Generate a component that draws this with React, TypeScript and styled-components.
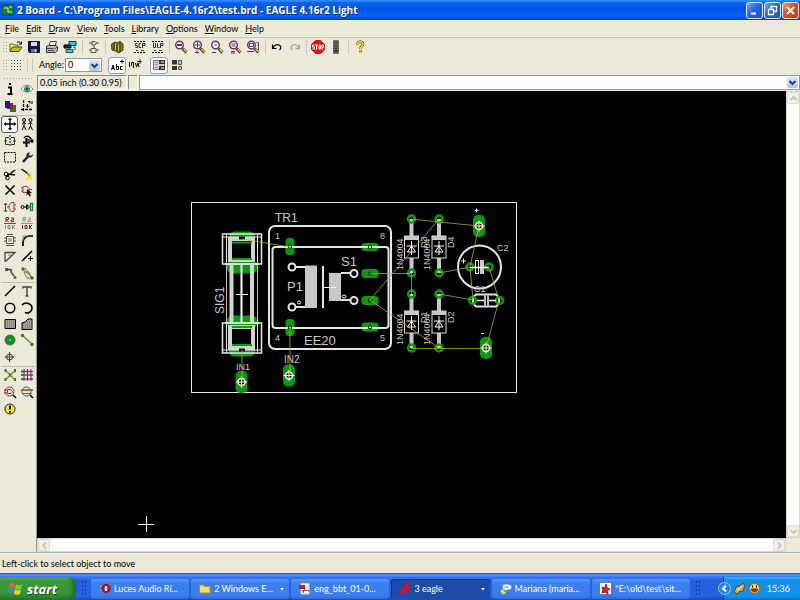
import React from "react";
import styled, { createGlobalStyle } from "styled-components";

const Global = createGlobalStyle`
  * { box-sizing: border-box; }
  body { margin: 0; background: #ece9d8; }
  button, input, select { font: inherit; margin: 0; padding: 0; color: inherit; }
`;

const Window = styled.div`
  display: flex;
  flex-direction: column;
  min-height: 100vh;
  background: #ece9d8;
  color: #000;
  font: 9px/12px Lato, "Liberation Sans", sans-serif;
  overflow: hidden;
  svg { display: block; flex-shrink: 0; }
`;

const TitleBar = styled.header`
  display: flex;
  align-items: center;
  height: 20px;
  padding: 0 1px 0 2px;
  gap: 3px;
  background: linear-gradient(#3a94ff 0, #0a5ff0 15%, #0054e3 45%, #0262fb 80%, #0040c8 100%);
  color: #fff;
`;
const Title = styled.h1`
  flex: 1;
  margin: 0;
  font: bold 10px/14px "Open Sans", "Noto Sans", sans-serif;
  white-space: nowrap;
  text-shadow: 1px 1px #0a2f8c;
`;
const WindowButton = styled.button<{ $close?: boolean }>`
  display: grid;
  place-items: center;
  width: 17px;
  height: 17px;
  border: 1px solid #dbe6fb;
  border-radius: 3px;
  background: ${(p) => (p.$close ? "linear-gradient(135deg,#f0a088,#e0532c 40%,#c63a12)" : "linear-gradient(135deg,#7fa6f5,#2a62e0 45%,#2050c8)")};
`;
const WindowButtons = styled.div`
  display: flex;
  gap: 1px;
`;

const MenuBar = styled.nav`
  display: flex;
  align-items: center;
  height: 18px;
  padding-left: 5px;
  gap: 7px;
  border-bottom: 1px solid #c5c2b2;
`;
const MenuItem = styled.button`
  border: 0;
  background: none;
  white-space: nowrap;
  &::first-letter { text-decoration: underline; }
`;

const Toolbar = styled.div`
  display: flex;
  align-items: center;
  height: 18px;
`;
const Grip = styled.span`
  width: 5px;
  height: 12px;
  margin-left: 2px;
  background: radial-gradient(circle, #a9a693 1px, transparent 1px) 0 0 / 3px 3px;
`;
const Tool = styled.button<{ $on?: boolean }>`
  display: grid;
  place-items: center;
  width: 18px;
  height: 17px;
  border: 1px solid ${(p) => (p.$on ? "#8aa0bd" : "transparent")};
  border-radius: 3px;
  background: ${(p) => (p.$on ? "#fbfbf8" : "none")};
`;
const Divider = styled.span<{ $w: number; $hidden?: boolean }>`
  width: ${(p) => p.$w}px;
  height: 14px;
  background: linear-gradient(${(p) => (p.$hidden ? "transparent, transparent" : "#cbc8b8, #cbc8b8")}) center / 1px 100% no-repeat;
`;
const AngleLabel = styled.label`
  display: flex;
  align-items: center;
  gap: 1px;
  margin: 0 6px 0 4px;
`;
const ComboFrame = styled.span`
  display: flex;
  align-items: center;
  width: 37px;
  height: 14px;
  border: 1px solid #7f9db9;
  background: #fff;
  padding-right: 1px;
  select {
    appearance: none;
    flex: 1;
    min-width: 0;
    border: 0;
    padding-left: 2px;
    background: none;
  }
`;

const Main = styled.main`
  display: flex;
  flex: 1;
`;
const Palette = styled.aside`
  display: flex;
  flex-direction: column;
  width: 36px;
  padding: 3px 1px 0;
`;
const PaletteGrip = styled.span`
  height: 4px;
  margin: 0 2px;
  background: radial-gradient(circle, #a9a693 1px, transparent 1px) 0 0 / 3px 3px;
`;
const PaletteGroup = styled.div<{ $h: number }>`
  display: grid;
  grid-template-columns: 17px 17px;
  grid-auto-rows: 1fr;
  height: ${(p) => p.$h}px;
  & + & { border-top: 1px solid #bfbcab; margin-top: 1px; }
`;
const PaletteTool = styled(Tool)`
  width: 17px;
  height: 100%;
  border-width: ${(p) => (p.$on ? "1px" : "0")};
  border-color: ${(p) => (p.$on ? "#3f5a86" : "transparent")};
`;

const Work = styled.section`
  display: flex;
  flex: 1;
  min-width: 0;
  flex-direction: column;
  padding-top: 1px;
`;
const CommandRow = styled.div`
  display: flex;
  height: 16px;
  gap: 1px;
  padding: 0 0 1px 1px;
`;
const Coordinates = styled.output`
  width: 90px;
  padding: 0 0 0 2px;
  line-height: 14px;
  white-space: nowrap;
  border: 1px solid #fff;
  border-top-color: #8f8c7c;
  border-left-color: #8f8c7c;
`;
const CommandSpacer = styled.span`
  width: 10px;
  border: 1px solid #fff;
  border-top-color: #8f8c7c;
  border-left-color: #8f8c7c;
`;
const CommandBox = styled.div`
  display: flex;
  flex: 1;
  align-items: center;
  padding: 0 1px;
  border: 1px solid #7f9db9;
  background: #fff;
  input { flex: 1; min-width: 0; border: 0; outline: 0; background: none; }
`;
const DropButton = styled.button`
  display: grid;
  place-items: center;
  width: 11px;
  height: 11px;
  border: 0;
  border-radius: 2px;
  background: linear-gradient(#dbe6fd, #b0c5f3);
`;
const BoardArea = styled.div`
  display: grid;
  flex: 1;
  grid-template-columns: 1fr 14px;
  grid-template-rows: 1fr 14px;
  border-left: 1px solid #9a9a90;
`;
const Canvas = styled.div`
  display: flex;
  background: #000;
  overflow: hidden;
  svg { flex: 1; min-width: 0; }
`;
const Scroll = styled.div<{ $vertical?: boolean }>`
  display: flex;
  flex-direction: ${(p) => (p.$vertical ? "column" : "row")};
  justify-content: space-between;
  border: 1px solid #d5d6d0;
  background: #fbfbf8;
`;
const ScrollButton = styled.button`
  display: grid;
  place-items: center;
  width: 12px;
  height: 12px;
  border: 1px solid #dedbcb;
  border-radius: 2px;
  background: #f2f0e6;
`;
const Status = styled.footer`
  height: 21px;
  padding: 5px 2px 0;
  border-top: 1px solid #a7b6c4;
  white-space: nowrap;
`;

const Taskbar = styled.footer`
  display: flex;
  height: 27px;
  padding-top: 4px;
  background: linear-gradient(#1f50b8 0, #5b97f5 8%, #3a78ea 14%, #245edb 30%, #2663e0 85%, #1d4cb8 100%);
  color: #fff;
`;
const Start = styled.button`
  display: flex;
  align-items: center;
  gap: 4px;
  width: 76px;
  padding-left: 8px;
  border: 0;
  border-radius: 0 8px 8px 0;
  background: linear-gradient(#7cc077 0, #3c9a3c 18%, #379637 70%, #2b7a2b 100%);
  box-shadow: inset -3px 0 4px #23692a;
  font: italic bold 13px/18px "Open Sans", sans-serif;
  text-shadow: 1px 1px 1px #1d4d1d;
`;
const TaskGrip = styled.span`
  width: 6px;
  height: 16px;
  margin: 3px 4px 0 5px;
  background: radial-gradient(circle, #153f9e 1px, transparent 1px) 0 0 / 3px 4px;
`;
const Tasks = styled.div`
  display: grid;
  grid-template-columns: repeat(6, minmax(0, 1fr));
  flex: 1;
  gap: 2px;
  padding: 2px 0 1px;
`;
const Task = styled.button<{ $on?: boolean }>`
  display: flex;
  align-items: center;
  gap: 3px;
  padding: 0 4px 0 8px;
  border: 0;
  border-radius: 2px;
  background: ${(p) => (p.$on ? "#1c4ba8" : "linear-gradient(#5a96fa, #3c81f0 20%, #3a7cee 85%, #3069d8)")};
  box-shadow: ${(p) => (p.$on ? "inset 1px 1px 1px #123680" : "none")};
  text-align: left;
  white-space: nowrap;
`;
const TaskName = styled.span`
  flex: 1;
  overflow: hidden;
`;
const Tray = styled.div`
  display: flex;
  align-items: center;
  gap: 2px;
  margin-left: 18px;
  padding-right: 10px;
  background: linear-gradient(#3bb0f8 0, #1290e8 15%, #1190ea 85%, #0d6fc4 100%);
  border-left: 1px solid #0a4aa8;
`;
const TrayToggle = styled.button`
  display: grid;
  place-items: center;
  width: 13px;
  height: 13px;
  margin-left: -6px;
  border: 1px solid #8cc8ff;
  border-radius: 50%;
  background: #2b7fe8;
`;
const Clock = styled.time`
  margin-left: 4px;
`;

type IconProps = { children: React.ReactNode; w?: number; h?: number };
const Icon = ({ children, w = 14, h = 14 }: IconProps) => (
  <svg width={w} height={h} viewBox={`0 0 ${w} ${h}`} fill="none" stroke="#000" strokeWidth="1" aria-hidden="true">
    {children}
  </svg>
);
const Chevron = ({ d, color = "#26406f" }: { d: string; color?: string }) => (
  <Icon w={9} h={9}><path d={d} stroke={color} strokeWidth="2" /></Icon>
);
const down = "M1.5 3l3 3 3-3";
const up = "M1.5 6l3-3 3 3";
const left = "M6 1.5l-3 3 3 3";
const right = "M3 1.5l3 3-3 3";

const Lens = ({ children }: { children?: React.ReactNode }) => (
  <Icon>
    <path d="M8.5 8.5l4 4" stroke="#333" strokeWidth="3" />
    <path d="M9.5 9l3 3" stroke="#e8e040" strokeWidth="1.3" />
    <circle cx="5.5" cy="5" r="3.8" fill="#fbf4fb" stroke="#63385f" strokeWidth="1.4" />
    {children}
  </Icon>
);
const maroon = "#7a1f6a";

const menus = ["File", "Edit", "Draw", "View", "Tools", "Library", "Options", "Window", "Help"];

type Entry = { label: string; icon: React.ReactNode; on?: boolean } | { gap: number; hidden?: boolean };
const actions: Entry[] = [
  { label: "Open", icon: <Icon><path d="M1 11V4h3l1 1h4v2" fill="#f5ee8c" stroke="#6b6418" /><path d="M1 11.5L3.500 7H13l-3 4.500z" fill="#c9bd20" stroke="#4d4810" /><path d="M8 2.500c2-1.500 3-.5 4 1M12.500 1.500v2.500H10" /></Icon> },
  { label: "Save", icon: <Icon><path d="M1.500 1.500h11v11h-10l-1-1z" fill="#14145e" stroke="#0b0b35" /><path d="M4 2h6v4H4z" fill="#d8dcf0" stroke="none" /><path d="M4 9h6v3.500H4z" fill="#777" stroke="none" /><path d="M8 9.500h1v2H8z" fill="#fff" stroke="none" /></Icon> },
  { label: "Print", icon: <Icon><path d="M4 6l1.500-4.500h6L10 6" fill="#fff" stroke="#444" /><path d="M1.500 6.500l2-1h8l1 1v4l-2 2h-9z" fill="#b9b9b0" stroke="#333" /><path d="M1.500 8.500h9l2-2M3 10.500h6" stroke="#444" /><path d="M8 9h2" stroke="#dfd020" /></Icon> },
  { label: "CAM Processor", icon: <Icon><path d="M6 1.500h7v4H6z" fill="#18d6e0" stroke="#14313a" /><path d="M1 5h7v3H1z" fill="#0c2d4e" /><path d="M3 9.500h7v3H3z" fill="#20dce8" stroke="#19505a" /><path d="M10 7h2v3" stroke="#1b6670" /></Icon> },
  { gap: 6 },
  { label: "Schematic", icon: <Icon><path d="M5 1.500h3l1.500 1.500L8 5H5zM4 8.500h5v4H4zM2 3h3M2 10h2M9 3h3M9 10h3M7 5v3" stroke="#55534a" /></Icon> },
  { gap: 5 },
  { label: "Use library", icon: <Icon><path d="M1.500 4L5 2l2 1 3-1.500L13 4v6l-4 3-3-2-4-1z" fill="#86801e" stroke="#3f3c08" /><path d="M4 3.500v7M7 4v8M10 3v9" stroke="#24220a" /><path d="M5.500 4v6M8.500 5v6" stroke="#d9cf36" /></Icon> },
  { gap: 5, hidden: true },
  { label: "Script", icon: <Icon><path d="M1 1.500h12M1 12.500h12" strokeDasharray="2 1" /><path d="M4.500 3.500h-2v2h2v2h-2M8 3.500H6v4h2M9.500 8V3.500H12v2H9.500" stroke="#333" /><path d="M3 10.500h2M8 10.500h3" stroke="#444" /></Icon> },
  { label: "Run ULP", icon: <Icon><path d="M1 1.500h12M1 12.500h12" strokeDasharray="2 1" /><path d="M2.500 3v4.500h2V3M6.500 3v4.500h2M9.500 8V3.500H12v2H9.500" stroke="#333" /><path d="M3 10.500h2M8 10.500h3" stroke="#444" /></Icon> },
  { gap: 5 },
  { label: "Zoom to fit", icon: <Lens><path d="M3 5h5" stroke={maroon} strokeWidth="2" /></Lens> },
  { label: "Zoom in", icon: <Lens><path d="M3 5h5M5.500 2.500v5M3 12.500h4M5 10.500v3" stroke={maroon} /></Lens> },
  { label: "Zoom out", icon: <Lens><path d="M4.500 5h2M2 12.500h4" stroke={maroon} /></Lens> },
  { label: "Zoom redraw", icon: <Lens><path d="M3.500 4h4M3.500 6h4M3 11.500h4M3 13h4" stroke={maroon} /></Lens> },
  { label: "Zoom select", icon: <Lens><path d="M3.500 3.500h4v3h-4zM10.500 2.500h2v8M1 11.500h7" stroke="#63385f" /></Lens> },
  { gap: 6 },
  { label: "Undo", icon: <Icon><path d="M2.500 4.500v4h4M3 8c1-3 4-4 6-3s2.500 3 .5 5" strokeWidth="1.2" /></Icon> },
  { label: "Redo", icon: <Icon><path d="M11.500 4.500v4h-4M11 8c-1-3-4-4-6-3s-2.500 3-.5 5" stroke="#aaa797" strokeWidth="1.3" /></Icon> },
  { gap: 5 },
  { label: "Stop", icon: <Icon><path d="M4.500.500h5l4 4v5l-4 4h-5l-4-4v-5z" fill="#ee1111" stroke="#d01010" /><path d="M3.500 5H1.500v2h2v2h-2M4 5h3M5.500 5v4.500M8 5h1.500v4H8zM11 9.500V5h1.500v2.500H11" stroke="#fff" /></Icon> },
  { label: "Go", icon: <Icon><path d="M4.500.500h5v13h-5z" fill="#6e716b" stroke="#4c4f4a" strokeDasharray="2 1" /><circle cx="7" cy="3" r="1.300" fill="#c9c9bd" stroke="#222" /><circle cx="7" cy="7" r="1.300" fill="#b4b7ab" stroke="#222" /><circle cx="7" cy="11" r="1.300" fill="#2d8047" stroke="#222" /></Icon> },
  { gap: 6 },
  { label: "Help", icon: <Icon><path d="M4.500 4.500C4.500 1 10 1 10 4c0 2-2.500 2.500-2.500 5M7.500 10.500v2" stroke="#3d3a05" strokeWidth="2.600" /><path d="M4.500 4.500C4.500 1 10 1 10 4c0 2-2.500 2.500-2.500 5M7.500 11v1.500" stroke="#f4ec10" strokeWidth="1.600" /></Icon> },
];

const G = "#188a2c";
const R = "#b03030";
type PaletteEntry = [string, React.ReactNode, boolean?] | null;
const groups: { h: number; tools: PaletteEntry[] }[] = [
  {
    h: 33,
    tools: [
      ["Info", <path d="M5 5.500h3V12M4.500 12h5M6 2h2" strokeWidth="2" />],
      ["Show", <><path d="M1 7c3-5 9-5 12 0-3 4-9 4-12 0z" fill="#fff" stroke="#8c7e30" /><circle cx="7" cy="7" r="2.500" fill="#20b8c0" stroke="#107880" /><circle cx="7" cy="7" r="1" fill="#000" stroke="none" /></>],
      ["Display", <><path d="M7 6h6v7H7z" fill="#1d7d33" stroke="none" /><path d="M4 4h6v6H4z" fill="#a01c38" stroke="none" /><path d="M2 2h5v7H2z" fill="#161c88" stroke="none" /></>],
      ["Mark", <><path d="M3.500 1v12M1 10.500h12" strokeDasharray="3 1" strokeWidth="1.300" /><path d="M5.500 7h4M7.500 5v4M8 2.500h2v2M12 2v3" /></>],
    ],
  },
  {
    h: 166,
    tools: [
      ["Move", <><path d="M7 2v10M2 7h10" strokeWidth="1.300" /><path d="M7 .500L5 3h4zM7 13.500L5 11h4zM.500 7L3 5v4zM13.500 7L11 5v4z" fill="#000" stroke="none" /></>, true],
      ["Copy", <><circle cx="4" cy="3" r="1.500" /><circle cx="10.500" cy="3" r="1.500" /><path d="M4 4.500V9l-2 4M4 9l2 4M2 7l2-1.500L6 7M10.500 4.500V9l-2 4M10.500 9l2 4M8.500 7l2-1.500 2 1.500" /></>],
      ["Mirror", <><path d="M7 1v12" strokeDasharray="2 1" /><path d="M6 3.500H2.500v7H6M8 3.500h3.500v7H8M1 7h3M10 7h3" stroke="#333" /></>],
      ["Rotate", <><path d="M6.500 4v9M3 8.500h7" strokeWidth="2" /><path d="M4 4c3-4 7-1 8.500 4M12.500 8.500l-3-2M12.500 8.500l.5-3" strokeWidth="1.300" /><path d="M7 5h3v3H7z" fill="#555" stroke="none" /></>],
      ["Group", <path d="M1.500 2.500h11v9.500h-11z" strokeDasharray="2 1" />],
      ["Change", <><path d="M3 12L8 6.500" strokeWidth="2.500" stroke="#222" /><path d="M7 7c-2-3 1-5 3-4.500L9 4.500l1.500 1.500L13 4c0 3-2 4-4.500 3.500z" fill="#333" stroke="none" /></>],
      ["Cut", <><path d="M3 10L12 3M5 7L12 8" strokeWidth="1.400" /><circle cx="3" cy="7" r="1.800" /><circle cx="4.500" cy="11" r="1.800" /></>],
      ["Paste", <><path d="M1.500 2l7 5" strokeWidth="1.500" /><path d="M7 6l4 4" stroke="#b9a016" strokeWidth="2" /><path d="M6 11.500h6M10 9h2" stroke="#f7ec20" strokeWidth="3" /></>],
      ["Delete", <path d="M2.500 2.500l9 9M11.500 2.500l-9 9" strokeWidth="1.500" />],
      ["Add", <><path d="M3 3.500h3c4 0 4 6 0 6H3zM1 5h2M1 8h2M9 6.500h3" stroke={R} /><path d="M7 6l5 4-2.500.500L11 13l-1.500.500L8 11l-1.500 1.500z" fill="#111" stroke="none" /></>],
      ["Pinswap", <><path d="M11 2.500H9c-4 1-4 8 0 9h2zM11 5h2M11 9h2M4 7h2" stroke={R} /><path d="M2.500 4v7M1 5l1.500-2L4 5M1 10l1.500 2L4 10" stroke="#33573d" /></>],
      ["Gateswap", <><circle cx="2.500" cy="7" r="1.500" /><path d="M4 7h2" /><path d="M6.500 5h1.500v4H6.500z" /><path d="M10.500 3.500h2v7h-2zM8 7h2" stroke={G} strokeWidth="1.300" /></>],
      ["Name", <><path d="M3 6V1.500h2.500v2H3.500l2 2.500M8 2h2.500v2H8v1.500h3" stroke="#7a2220" /><path d="M1 7.500h12" stroke={R} /><path d="M2.500 9v4M5 9.500h2v3H5zM9.500 9v4M12 9l-2 2 2 2" stroke="#888476" /></>],
      ["Value", <><path d="M3 6V1.500h2.500v2H3.500l2 2.500M8 2h2.500v2H8v1.500h3" stroke="#98958a" /><path d="M1 7.500h12" stroke="#c38378" /><path d="M2.500 9v4M5 9.500h2v3H5zM9.500 9v4M12 9l-2 2 2 2" stroke="#7a2220" /></>],
      ["Smash", <><path d="M3.500 3.500h7v7h-7zM1 5h2M1 8h2M11 5h2M11 8h2M3 12.500h8M4 1.500h6" stroke="#55534b" /><path d="M5 6h4M5 8h4" stroke="#777" /></>],
      ["Miter", <><path d="M3 13V9c0-3 3-6 6-6h4" strokeWidth="1.700" /><path d="M3 8V3h5" stroke="#888" /></>],
      ["Split", <><path d="M2 12V3.500h10L3 12z" strokeWidth="1.300" stroke="#444" /><path d="M5 6h3" stroke="#888" /></>],
      ["Optimize", <><path d="M2 12L12 2" strokeWidth="1.600" /><path d="M8 9.500h5M10.500 7v5" /></>],
      ["Route", <><path d="M2 3.500h3" stroke={G} strokeWidth="3" /><path d="M4 3.500h4v3" stroke="#26369a" strokeWidth="1.500" /><path d="M8 6l3 4" stroke="#d02020" strokeWidth="1.500" /><circle cx="12" cy="11.500" r="1.500" fill={G} stroke="none" /></>],
      ["Ripup", <><path d="M2 3l10 8" stroke="#887d20" /><path d="M5 2l6 8M4 6h5l2 6H7z" stroke="#80764a" /><circle cx="3" cy="3" r="1.700" fill={G} stroke="none" /><circle cx="12" cy="12" r="1.700" fill={G} stroke="none" /></>],
    ],
  },
  {
    h: 83,
    tools: [
      ["Wire", <path d="M2 12L12 2" strokeWidth="1.500" />],
      ["Text", <path d="M3 4.500V3h8v1.500M7 3v9M5.500 12h3" strokeWidth="1.400" stroke="#444" />],
      ["Circle", <circle cx="7" cy="7" r="4.800" strokeWidth="1.500" />],
      ["Arc", <path d="M2 4c4-4 10-1 10 3s-4 6-7 4.500" strokeWidth="1.600" />],
      ["Rect", <><path d="M2 2.500h10.500v9H2z" fill="#a7a59b" /><path d="M2 4h10M2 6h10M2 8h10M2 10h10" strokeDasharray="1 1" stroke="#666" /></>],
      ["Polygon", <><path d="M2 12.500V6l3-1 3-3h4v10.500z" fill="#a7a59b" /><path d="M3 7h9M3 9h9M3 11h9M7 5h5" strokeDasharray="1 1" stroke="#666" /></>],
      ["Via", <><circle cx="7" cy="7" r="5" fill={G} stroke={G} /><circle cx="7" cy="7" r="1" fill="#9fd8a6" stroke="none" /></>],
      ["Signal", <><path d="M2 2l10 9" stroke="#8e8621" strokeWidth="1.500" /><circle cx="2.500" cy="2.500" r="1.700" fill={G} stroke="none" /><circle cx="12" cy="11.500" r="1.700" fill={G} stroke="none" /></>],
      ["Hole", <><circle cx="6.500" cy="7" r="3" stroke="#333" /><path d="M6.500 2v10M1.500 7h10" stroke="#444" /></>],
      null,
    ],
  },
  {
    h: 51,
    tools: [
      ["Ratsnest", <><path d="M2 2l10 10M12 3L2 12" stroke="#7f8a20" strokeWidth="1.300" /><path d="M1.500 2.500h2M11 2.500h2M1.500 11.500h2M11 11.500h2M6 7h2" stroke={G} strokeWidth="3" /></>],
      ["Autorouter", <><path d="M1 3.500h12M1 7h12M1 11h12" stroke="#c32a4c" strokeWidth="1.400" /><path d="M4 1v12M7.500 1v12M11 1v12" stroke="#303ba8" /><path d="M1 3.500h2M1 7h2M1 11h2" stroke={G} strokeWidth="2" /></>],
      ["ERC", <><circle cx="6.500" cy="6.500" r="4.500" stroke="#55513f" /><path d="M10 10l3 3" strokeWidth="1.600" /><path d="M4.500 4.500h2.500c3 1 3 4 0 4H4.500z" stroke={R} /><path d="M1 5h3M1 8h3" stroke={R} /></>],
      ["DRC", <><circle cx="6.500" cy="6.500" r="4.500" stroke="#55513f" /><path d="M10 10l3 3" strokeWidth="1.600" /><path d="M1 5h12" stroke="#b03030" strokeWidth="1.500" /><path d="M2 8.500h10" stroke={G} /></>],
      ["Errors", <><circle cx="7" cy="7" r="5" fill="#f6ee18" stroke="#222" /><path d="M7 3.500v4M7 9v1.800" strokeWidth="2" /></>],
    ],
  },
];

const wires = [
  "M242 239L290 247", "M242 350V382", "M290 327V375", "M370 273.500H411", "M370 300L439 219",
  "M370 300L439 348", "M411 219L439 222L479 226", "M411.500 273V294", "M439 273L470 267",
  "M439 294L473 300", "M411 348.500H486", "M479 226L470 267L473 300", "M489 267L499 300L486 348",
];
const Pad = ({ x, y, w, h }: { x: number; y: number; w: number; h: number }) => (
  <rect x={x - w / 2} y={y - h / 2} width={w} height={h} rx={Math.min(w, h) / 2.5} fill="#0a990f" />
);
const Terminal = ({ x, y }: { x: number; y: number }) => (
  <g>
    <Pad x={x} y={y} w={12} h={22} />
    <circle cx={x} cy={y} r="3.500" fill="#000" stroke="#fff" strokeWidth="1.500" />
    <path d={`M${x - 5.5} ${y}h11M${x} ${y - 5.5}v11`} stroke="#fff" />
  </g>
);
const Ring = ({ x, y }: { x: number; y: number }) => <circle cx={x} cy={y} r="3.500" fill="none" stroke="#0a990f" strokeWidth="2.500" />;
const Diode = ({ x, top, body }: { x: number; top: number; body: number }) => (
  <g>
    <path d={`M${x} ${top}V${top + 54}`} stroke="#c8c8c8" strokeWidth="4" />
    <rect x={x - 7} y={body} width="14" height="22" fill="#000" stroke="#dcdcdc" />
    <rect x={x - 7} y={body} width="14" height="4" fill="#c8c8c8" />
    <path d={`M${x - 5} ${body + 10}h10M${x} ${body + 5}v14M${x - 4} ${body + 16}l4-6 4 6z`} stroke="#fff" fill="none" />
    <Ring x={x} y={top} />
    <Ring x={x} y={top + 54} />
  </g>
);
const Upright = ({ x, y, size, children }: { x: number; y: number; size: number; children: string }) => (
  <text transform={`translate(${x} ${y}) rotate(-90)`} fontSize={size}>{children}</text>
);
const FuseClip = ({ y }: { y: number }) => (
  <g stroke="#e8e8e8" fill="none">
    <rect x="222.500" y={y} width="39" height="30" strokeWidth="1.500" />
    <path d={`M226.500 ${y}v30M257.500 ${y}v30`} />
    <rect x="230" y={y + 5} width="23" height="21" fill="#000" stroke="#d2d2d2" strokeWidth="4" />
    <path d={`M222 ${y + 3}h40`} />
  </g>
);

const Board = () => (
  <svg role="img" aria-label="Board layout">
    <g transform="translate(-37 -91)" fill="#c8c8c8" fontFamily="Liberation Sans, Arial, sans-serif">
      <rect x="191.500" y="202.500" width="325" height="190" fill="none" stroke="#e6e6e6" />

      <Pad x={242} y={238} w={26} h={13} />
      <Pad x={242} y={267} w={30} h={13} />
      <Pad x={242} y={322} w={30} h={13} />
      <Pad x={242} y={350} w={26} h={13} />
      <FuseClip y={234} />
      <g transform="translate(0 587) scale(1 -1)"><FuseClip y={234} /></g>
      <path d="M231.500 263v60M252 263v60" stroke="#d2d2d2" strokeWidth="4" />
      <path d="M226.500 263v60M257.500 263v60" stroke="#bbb" />
      <path d="M225 264h34M225 323h34" stroke="#ddd" strokeWidth="2" />
      <path d="M232 242.500h20M232 345h20M232 259h20M232 327h20" stroke="#0a990f" strokeWidth="2" />
      <path d="M241.500 264v58" stroke="#fff" strokeWidth="2" />
      <path d="M236 294.500h12" stroke="#fff" />
      <path d="M239 238h6M239 350h6" stroke="#111" strokeWidth="3" />

      <Pad x={290} y={246.5} w={9} h={17} />
      <Pad x={290} y={327.5} w={9} h={17} />
      <Pad x={370} y={247} w={17} h={8} />
      <Pad x={370} y={273.5} w={17} h={9} />
      <Pad x={370} y={300.5} w={17} h={9} />
      <Pad x={370} y={327} w={17} h={9} />
      <g fill="none" stroke="#e4e4e4" strokeWidth="2">
        <rect x="269" y="226" width="122" height="123" rx="6" />
        <rect x="272.500" y="247" width="116" height="81" rx="3" />
        <circle cx="292" cy="267" r="3.500" />
        <circle cx="292" cy="307" r="3.500" />
        <path d="M295 267h10M295 307h10M323 266v42M341 273h9M341 300h9" />
        <circle cx="354" cy="273.500" r="3.500" />
        <circle cx="354" cy="300.500" r="3.500" />
      </g>
      <path d="M305 265.500h12V308h-12zM329 273h12v28h-12z" />
      <path d="M323 287.500h13" stroke="#fff" />
      <circle cx="299" cy="302.500" r="1.500" fill="none" stroke="#fff" />
      <ellipse cx="344" cy="296.500" rx="2" ry="1.500" fill="none" stroke="#fff" />
      <path d="M288.500 245h3v3h-3zM288.500 326h3v3h-3zM368.500 245.500h3v3h-3zM368.500 272h3v3h-3zM368.500 299h3v3h-3zM368.500 325.500h3v3h-3z" fill="none" stroke="#063d08" />

      <Diode x={411.5} top={219} body={236} />
      <Diode x={439} top={219} body={236} />
      <Diode x={411.5} top={294} body={311} />
      <Diode x={439} top={294} body={311} />

      <circle cx="479.500" cy="267" r="21.500" fill="none" stroke="#e4e4e4" strokeWidth="2" />
      <Ring x={470} y={267} />
      <Ring x={489} y={267} />
      <rect x="475.500" y="260.500" width="3" height="13" fill="none" stroke="#eee" />
      <rect x="480" y="260" width="4" height="14" />
      <path d="M470 267.500h19" stroke="#fff" strokeWidth="1.500" />
      <path d="M461 261h5M463.500 258.500v5M474.500 210.500h4M476.500 208.500v4M481 333.500h3" stroke="#eee" />
      <path d="M476 294.500h20l3 3v6l-3 3h-20l-3-3v-6z" fill="#000" stroke="#e4e4e4" strokeWidth="2" />
      <Ring x={472.5} y={300.5} />
      <Ring x={499.5} y={300.5} />
      <path d="M477 300.500h7M489 300.500h7M485 295.500v10M488 295.500v10" stroke="#fff" strokeWidth="1.500" />

      <Terminal x={241.5} y={382} />
      <Terminal x={289} y={375.5} />
      <Terminal x={479} y={226} />
      <Terminal x={486} y={348} />
      <g fill="none" stroke="#b9b51c" strokeWidth="1" opacity="0.75">
        {wires.map((d) => <path key={d} d={d} />)}
      </g>

      <text x="275" y="222" fontSize="12">TR1</text>
      <text x="304" y="345" fontSize="13">EE20</text>
      <text x="287" y="291" fontSize="13">P1</text>
      <text x="341" y="266" fontSize="13">S1</text>
      <text x="275" y="239" fontSize="9">1</text>
      <text x="380" y="239" fontSize="9">8</text>
      <text x="275" y="341" fontSize="9">4</text>
      <text x="380" y="341" fontSize="9">5</text>
      <text x="236" y="370" fontSize="9">IN1</text>
      <text x="284" y="363" fontSize="10">IN2</text>
      <text x="497" y="251" fontSize="9">C2</text>
      <text x="474" y="292" fontSize="9">C1</text>
      <Upright x={224} y={314} size={12}>SIG1</Upright>
      <Upright x={403} y={270} size={9}>1N4004</Upright>
      <Upright x={430} y={270} size={9}>1N4004</Upright>
      <Upright x={403} y={345} size={9}>1N4004</Upright>
      <Upright x={430} y={345} size={9}>1N4004</Upright>
      <Upright x={427} y={248} size={9}>D3</Upright>
      <Upright x={454} y={248} size={9}>D4</Upright>
      <Upright x={427} y={323} size={9}>D1</Upright>
      <Upright x={454} y={323} size={9}>D2</Upright>
      <path d="M138 524.500h16M146.500 516v16" stroke="#fff" />
    </g>
  </svg>
);

const tasks: { name: string; icon: React.ReactNode; on?: boolean; count?: boolean }[] = [
  { name: "Luces Audio Rí...", icon: <><path d="M1 3l3 1M1 7h3" stroke="#a9c4ff" /><circle cx="7" cy="5.500" r="3.500" stroke="#a8151d" strokeWidth="2.500" /><path d="M7 3v5" stroke="#f4d5d5" strokeWidth="2" /></> },
  { name: "2 Windows E...", count: true, icon: <path d="M.500 2h4l1 1.500h5.500V10H.500z" fill="#f8dc6c" stroke="#b98f20" /> },
  { name: "eng_bbt_01-0...", icon: <><path d="M2 .500h8v10.500H2z" fill="#fff" stroke="#c9c9c9" /><path d="M0 2h6v4H0z" fill="#cc1c1c" stroke="none" /><path d="M4 10c1-3 2-4 2-5M3 8c3-1 5-1 7 0" stroke="#cc1c1c" /></> },
  { name: "3 eagle", on: true, count: true, icon: <path d="M1 11l1-5 2-1 2-4 4-1-1 4 2 3-3 1-3 3-2-1z" fill="#e01020" stroke="none" /> },
  { name: "Mariana (maria...", icon: <><circle cx="3.500" cy="8.500" r="3" fill="#d8e860" stroke="#4d90b8" /><path d="M5 1h3c5 0 5 6 1 6H7L5 9V7C1 7 1 1 5 1z" fill="#eef6ff" stroke="#4d7db8" /><path d="M4.500 4h4" stroke="#5f87b8" /></> },
  { name: "*E:\\old\\test\\sit...", icon: <><path d="M0 0h11v11H0z" fill="#fff" stroke="none" /><path d="M2 4l3 1 1-4 1 4 3 1-3 2 1 3-3-2-3 1 1-3z" fill="#e02020" stroke="#c01010" /></> },
];

export default function App() {
  return (
    <>
      <Global />
      <Window>
        <TitleBar>
          <Icon w={12} h={12}><path d="M0 1h12v10H0z" fill="#1c7c35" stroke="#0c5020" /><path d="M2 4h4v4h4M7 3h3" stroke="#d9efbe" /></Icon>
          <Title>2 Board - C:\Program Files\EAGLE-4.16r2\test.brd - EAGLE 4.16r2 Light</Title>
          <WindowButtons>
            <WindowButton aria-label="Minimize"><Icon w={11} h={11}><path d="M2 8.500h5" stroke="#fff" strokeWidth="2" /></Icon></WindowButton>
            <WindowButton aria-label="Restore"><Icon w={11} h={11}><path d="M4 4V1.500h5.500v5H7M1.500 4.500h5v5h-5z" stroke="#fff" strokeWidth="1.300" /></Icon></WindowButton>
            <WindowButton $close aria-label="Close"><Icon w={11} h={11}><path d="M2 2l7 7M9 2L2 9" stroke="#fff" strokeWidth="2" /></Icon></WindowButton>
          </WindowButtons>
        </TitleBar>
        <MenuBar>{menus.map((m) => <MenuItem key={m}>{m}</MenuItem>)}</MenuBar>

        <Toolbar>
          <Grip />
          {actions.map((a, i) =>
            "gap" in a ? <Divider key={i} $w={a.gap} $hidden={a.hidden} /> : <Tool key={i} aria-label={a.label}>{a.icon}</Tool>
          )}
        </Toolbar>
        <Toolbar>
          <Grip />
          <Tool aria-label="Grid">
            <Icon><path d="M2 2.500h11M2 5.500h11M2 8.500h11M2 11.500h11" strokeDasharray="1 2" stroke="#444" /></Icon>
          </Tool>
          <Divider $w={5} />
          <Divider $w={5} />
          <AngleLabel>
            Angle:
            <ComboFrame>
              <select defaultValue="0"><option>0</option><option>90</option><option>180</option><option>270</option></select>
              <DropButton as="span"><Chevron d={down} /></DropButton>
            </ComboFrame>
          </AngleLabel>
          <Tool $on aria-label="Normal text">
            <Icon><path d="M1.500 12l1.500-5 1.500 5M2 10.500h2M6.500 6v5.500h2v-3h-2M12.500 8.500h-2v3h2M10 3.500h4M12 1.500v4" /></Icon>
          </Tool>
          <Tool aria-label="Mirrored text">
            <Icon><path d="M1.500 4v5M3.500 8V4.500h2v4M5.500 4v6M7.500 5l1 4 1.500-4 1 4M9.500 3.500h4M12 1.500v4" /></Icon>
          </Tool>
          <Divider $w={6} $hidden />
          <Tool $on aria-label="Panes left">
            <Icon><path d="M1.500 2.500h11v9h-11z" fill="#d6d3c4" stroke="#777" /><path d="M7 2h6v4H7zM7 8h6v4H7z" fill="#333" stroke="none" /><path d="M9 4h3M9 10h3" stroke="#fff" /><path d="M3 4.500h3M3 6.500h3M3 9.500h3" stroke="#999" /></Icon>
          </Tool>
          <Tool aria-label="Panes right">
            <Icon><path d="M2 2h5v4.500H2zM2 8h5v4H2z" fill="#333" stroke="none" /><path d="M8.500 2.500h3v4h-3zM8.500 8.500h3v3h-3z" fill="#c9c6b6" stroke="#555" /></Icon>
          </Tool>
        </Toolbar>

        <Main>
          <Palette>
            <PaletteGrip />
            {groups.map((g, i) => (
              <PaletteGroup key={i} $h={g.h}>
                {g.tools.map((t, k) =>
                  t ? <PaletteTool key={k} $on={t[2]} aria-label={t[0]}><Icon>{t[1]}</Icon></PaletteTool> : <span key={k} />
                )}
              </PaletteGroup>
            ))}
          </Palette>
          <Work>
            <CommandRow>
              <Coordinates>0.05 inch (0.30 0.95)</Coordinates>
              <CommandSpacer />
              <CommandBox>
                <input aria-label="Command" />
                <DropButton aria-label="Command history"><Chevron d={down} /></DropButton>
              </CommandBox>
            </CommandRow>
            <BoardArea>
              <Canvas><Board /></Canvas>
              <Scroll $vertical>
                <ScrollButton aria-label="Scroll up"><Chevron d={up} color="#c9c6b8" /></ScrollButton>
                <ScrollButton aria-label="Scroll down"><Chevron d={down} color="#c9c6b8" /></ScrollButton>
              </Scroll>
              <Scroll>
                <ScrollButton aria-label="Scroll left"><Chevron d={left} color="#c9c6b8" /></ScrollButton>
                <ScrollButton aria-label="Scroll right"><Chevron d={right} color="#c9c6b8" /></ScrollButton>
              </Scroll>
            </BoardArea>
          </Work>
        </Main>
        <Status>Left-click to select object to move</Status>

        <Taskbar>
          <Start>
            <Icon w={15} h={15}>
              <g stroke="none">
                <path d="M2 3c2-1.500 4-1 5 0L6 7C5 6 3 6 1 7z" fill="#f2602c" />
                <path d="M8 3.500c2 1 4 1 6 0L13 8c-2 1-4 1-6 0z" fill="#84c83c" />
                <path d="M.800 8c2-1 4-1 5 0L5 12c-1-1-3-1-5 0z" fill="#3f82ee" />
                <path d="M6.800 8.800c2 1 4 1 6 0L12 13c-2 1-4 1-6 0z" fill="#f9cf2c" />
              </g>
            </Icon>
            start
          </Start>
          <TaskGrip />
          <Tasks>
            {tasks.map((t) => (
              <Task key={t.name} $on={t.on}>
                <Icon w={12} h={12}>{t.icon}</Icon>
                <TaskName>{t.name}</TaskName>
                {t.count && <Icon w={6} h={6}><path d="M1 2h4L3 4.500z" fill="#fff" stroke="none" /></Icon>}
              </Task>
            ))}
          </Tasks>
          <TaskGrip />
          <Tray>
            <TrayToggle aria-label="Show hidden icons"><Chevron d={left} color="#fff" /></TrayToggle>
            <Icon w={13} h={13}><path d="M1 10l3-6 2 1 4-4 2 3-3 6-2-1-3 3z" fill="#e8a040" stroke="#5c4a30" /><path d="M4 8l5-4" stroke="#fff0c0" strokeWidth="1.500" /></Icon>
            <Icon w={13} h={13}><circle cx="6.500" cy="6.500" r="5" fill="#ffd838" stroke="#b06818" /><path d="M3.500 7h6c0 4-6 4-6 0z" fill="#d02020" stroke="#802010" /><path d="M4.500 3.500v2M8.500 3.500v2" /></Icon>
            <Clock>15:36</Clock>
          </Tray>
        </Taskbar>
      </Window>
    </>
  );
}
